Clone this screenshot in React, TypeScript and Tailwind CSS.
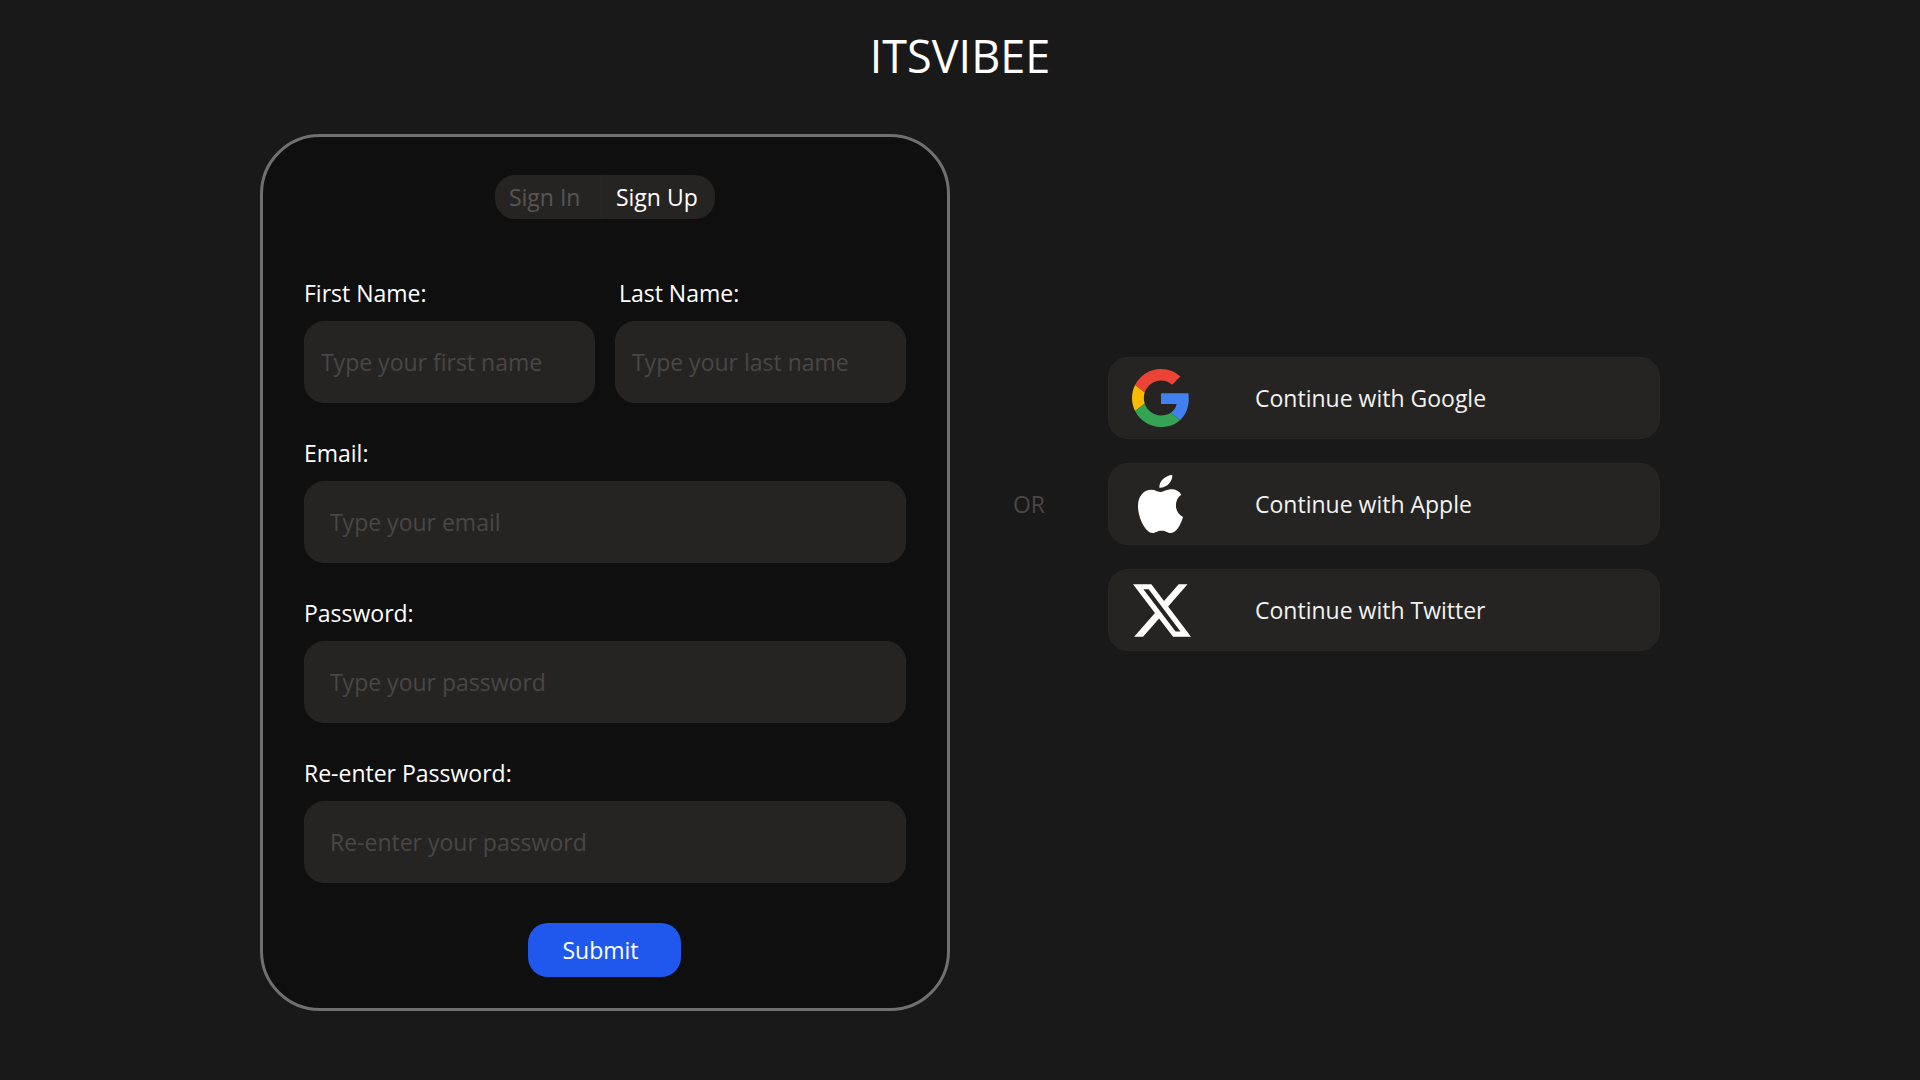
import { useState } from "react";
import type { ReactNode } from "react";

function GoogleLogo() {
  return (
    <svg viewBox="0 0 48 48" className="size-[58px]" aria-hidden="true">
      <path fill="#E94435" d="M24 9.5c3.54 0 6.71 1.22 9.21 3.6l6.85-6.85C35.9 2.38 30.47 0 24 0 14.62 0 6.51 5.38 2.56 13.22l7.98 6.19C12.43 13.72 17.74 9.5 24 9.5z" />
      <path fill="#4280EF" d="M46.98 24.55c0-1.57-.15-3.09-.38-4.55H24v9.02h12.94c-.58 2.96-2.26 5.48-4.78 7.18l7.73 6c4.51-4.18 7.09-10.36 7.09-17.65z" />
      <path fill="#F9B905" d="M10.53 28.59c-.48-1.45-.76-2.99-.76-4.59s.27-3.14.76-4.59l-7.98-6.19C.92 16.46 0 20.12 0 24c0 3.88.92 7.54 2.56 10.78l7.97-6.19z" />
      <path fill="#34A353" d="M24 48c6.48 0 11.93-2.13 15.89-5.81l-7.73-6c-2.15 1.45-4.92 2.3-8.16 2.3-6.26 0-11.57-4.22-13.47-9.91l-7.98 6.19C6.51 42.62 14.62 48 24 48z" />
    </svg>
  );
}

function AppleLogo() {
  return (
    <svg viewBox="0 0 138 174" className="h-[58px] w-[46px]" fill="#fff" aria-hidden="true">
      <path d="M103 0C104 20 86 39 64 38C63 18 82 1 103 0Z" />
      <path d="M68 51C77 51 86 43 101 43C113 43 124 49 130 59C107 73 108 113 135 126C129 147 115 174 99 174C88 174 84 167 71 167C57 167 53 174 43 174C24 174 0 131 0 93C0 61 19 44 40 44C52 44 60 51 68 51Z" />
    </svg>
  );
}

function XLogo() {
  return (
    <svg viewBox="0.51 2.25 22.317 19.5" className="h-[53px] w-[60px]" fill="#fff" aria-hidden="true">
      <path d="M18.244 2.25h3.308l-7.227 8.26 8.502 11.24H16.17l-5.214-6.817L4.99 21.75H1.68l7.73-8.835L1.254 2.25H8.08l4.713 6.231zm-1.161 17.52h1.833L7.084 4.126H5.117z" />
    </svg>
  );
}

type FieldProps = {
  id: string;
  label: string;
  placeholder: string;
  type?: string;
  compact?: boolean;
  inset?: boolean;
};

function Field({ id, label, placeholder, type = "text", compact, inset }: FieldProps) {
  return (
    <div className="flex min-w-0 flex-1 flex-col gap-3">
      <label htmlFor={id} className={inset ? "pl-1 leading-8" : "leading-8"}>
        {label}
      </label>
      <input
        id={id}
        type={type}
        placeholder={placeholder}
        className={
          "h-[82px] w-full rounded-[20px] border border-[#282525] bg-[#252422] outline-none placeholder:text-[#4a4646] placeholder:opacity-100 " +
          (compact ? "px-4" : "px-[25px]")
        }
      />
    </div>
  );
}

function SocialButton({ logo, children }: { logo: ReactNode; children: ReactNode }) {
  return (
    <button
      type="button"
      className="flex h-[82px] w-full items-center rounded-[20px] border border-[#282525] bg-[#252422] pl-[22px] text-left text-[#f2f2f2]"
    >
      <span className="flex w-[60px] shrink-0 justify-center">{logo}</span>
      <span className="pl-16">{children}</span>
    </button>
  );
}

export default function App() {
  const [mode, setMode] = useState<"in" | "up">("up");
  return (
    <div className="min-h-screen bg-[#191919] px-6 pt-6 pb-[69px] font-['Open_Sans',sans-serif] text-[23px] text-white">
      <h1 className="text-center text-[45px] leading-[64px]">ITSVIBEE</h1>

      <main className="mt-[46px] flex flex-col items-center justify-center gap-[63px] lg:flex-row">
        <form
          className="flex w-full max-w-[690px] flex-col items-center rounded-[60px] border-3 border-[#707070] bg-[#0f0f0f] px-[41px] pt-[38px] pb-[31px]"
          onSubmit={(e) => e.preventDefault()}
        >
          <div className="flex h-11 w-[220px] overflow-hidden rounded-[20px] bg-[#252422]">
            <button
              type="button"
              onClick={() => setMode("in")}
              className={"flex-1 border-r-3 border-[#2a2525] pl-[14px] text-left " + (mode === "in" ? "text-white" : "text-[#5a5454]")}
            >
              Sign In
            </button>
            <button
              type="button"
              onClick={() => setMode("up")}
              className={"w-28 pl-[13px] text-left " + (mode === "up" ? "text-white" : "text-[#5a5454]")}
            >
              Sign Up
            </button>
          </div>

          <div className="mt-[58px] flex w-full flex-col gap-[34px]">
            <div className="flex gap-5">
              <Field id="first-name" label="First Name:" placeholder="Type your first name" compact />
              <Field id="last-name" label="Last Name:" placeholder="Type your last name" compact inset />
            </div>
            <Field id="email" label="Email:" placeholder="Type your email" type="email" />
            <Field id="password" label="Password:" placeholder="Type your password" type="password" />
            <Field id="password-again" label="Re-enter Password:" placeholder="Re-enter your password" type="password" />
          </div>

          <button type="submit" className="mt-10 h-[54px] w-[153px] rounded-[20px] bg-[#2058ee] pl-[34px] text-left">
            Submit
          </button>
        </form>

        <p className="text-[#4a4646] lg:pb-[137px]">OR</p>

        <div className="flex w-full max-w-[552px] flex-col gap-6 lg:pb-[137px]">
          <SocialButton logo={<GoogleLogo />}>Continue with Google</SocialButton>
          <SocialButton logo={<AppleLogo />}>Continue with Apple</SocialButton>
          <SocialButton logo={<XLogo />}>Continue with Twitter</SocialButton>
        </div>
      </main>
    </div>
  );
}
